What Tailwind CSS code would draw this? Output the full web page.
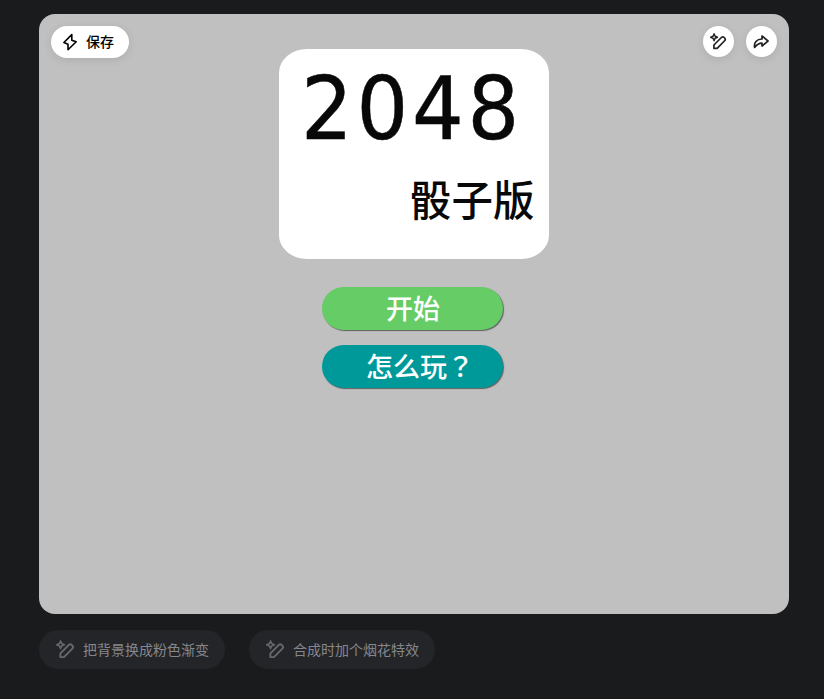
<!DOCTYPE html>
<html lang="zh-CN">
  <head>
    <meta charset="UTF-8" />
    <meta name="viewport" content="width=device-width, initial-scale=1.0" />
    <title>2048 骰子版</title>
    <script src="https://cdn.jsdelivr.net/npm/@tailwindcss/browser@4"></script>
  </head>
  <body class="h-screen overflow-hidden bg-[#1a1b1d] px-[39px] pt-3.5 font-['Noto_Sans_CJK_SC',sans-serif]">
    <!-- shared icon: pen with sparkle -->
    <svg class="hidden">
      <symbol id="magicPen" viewBox="0 0 20 20" fill="none" stroke="currentColor" stroke-linejoin="round">
        <path stroke-width="1.7" d="M4.8 1 6 3.8 8.8 5 6 6.2 4.8 9 3.6 6.2.8 5 3.6 3.8Z" />
        <path stroke-width="2" d="M4.6 18v-3.9L13.4 5.3a2.3 2.3 0 0 1 3.2 0l.6.6a2.3 2.3 0 0 1 0 3.2L8.4 18Z" />
      </symbol>
    </svg>

    <main class="relative flex h-[600px] w-[750px] flex-col items-center rounded-2xl bg-[#c0c0c0] pt-[35px]">
      <button class="absolute left-3 top-3 flex h-8 w-[78px] items-center rounded-full bg-white pl-[11px] text-sm font-medium text-black shadow-[0_2px_8px] shadow-black/10">
        <svg class="mr-2 h-[18px] w-4" viewBox="0 0 16 18" fill="none" stroke="currentColor" stroke-width="1.6" stroke-linejoin="round">
          <path d="M9.8 1.6 1.9 9.5 6 11.3V16.8L14.2 8.8 9.8 7.2Z" />
        </svg>
        <span class="pb-0.5">保存</span>
      </button>

      <div class="absolute right-3 top-3 flex gap-3 text-[#222]">
        <button class="flex size-[31px] items-center justify-center rounded-full bg-white shadow-[0_2px_8px] shadow-black/10">
          <svg class="mb-px size-[17px]"><use href="#magicPen" /></svg>
        </button>
        <button class="flex size-[31px] items-center justify-center rounded-full bg-white shadow-[0_2px_8px] shadow-black/10">
          <svg class="mr-px size-4" viewBox="0 0 16 16" fill="none" stroke="currentColor" stroke-width="1.7" stroke-linejoin="round">
            <path d="M9 2 15 7 9 12V9.2C6 9.1 4.1 10.4 1.6 13.4 .7 8.8 3.6 5.1 9 5Z" />
          </svg>
        </button>
      </div>

      <section class="flex h-[210px] w-[270px] flex-col rounded-[28px/24px] bg-white text-[#080808]">
        <h1 class="mt-[14px] ml-[22px] h-[92px] origin-left scale-x-[0.93] font-['DejaVu_Sans',sans-serif] text-[87.5px] leading-[92px] tracking-[4px] whitespace-nowrap [-webkit-text-stroke:0.5px]">2048</h1>
        <h2 class="mt-[13px] mr-[14.5px] text-right text-[41.5px] leading-[60px] font-medium">骰子版</h2>
      </section>

      <div class="mt-7 mr-[3px] flex flex-col gap-[15px] text-[27px] leading-[43px] font-medium text-white">
        <button class="h-[43px] w-[181px] rounded-full bg-[#66cc66] pb-0.5 pl-px leading-[41px] shadow-[1px_1px_1px_#00000080]">开始</button>
        <button class="h-[43px] w-[181px] rounded-full bg-[#009999] pb-0.5 pl-[15px] leading-[41px] shadow-[1px_1px_1px_#00000080]">怎么玩<span lang="zh-TW" class="font-['Noto_Sans_CJK_TC',sans-serif]">？</span></button>
      </div>
    </main>

    <div class="mt-4 flex gap-6 text-sm text-[#85878d]">
      <button class="flex h-[39px] w-[186px] items-center rounded-full bg-[#242529] pl-[17px]">
        <svg class="mr-2 size-[19px] text-[#66676a]"><use href="#magicPen" /></svg>
        <span class="pb-0.5">把背景换成粉色渐变</span>
      </button>
      <button class="flex h-[39px] w-[186px] items-center rounded-full bg-[#242529] pl-[17px]">
        <svg class="mr-2 size-[19px] text-[#66676a]"><use href="#magicPen" /></svg>
        <span class="pb-0.5">合成时加个烟花特效</span>
      </button>
    </div>
  </body>
</html>
